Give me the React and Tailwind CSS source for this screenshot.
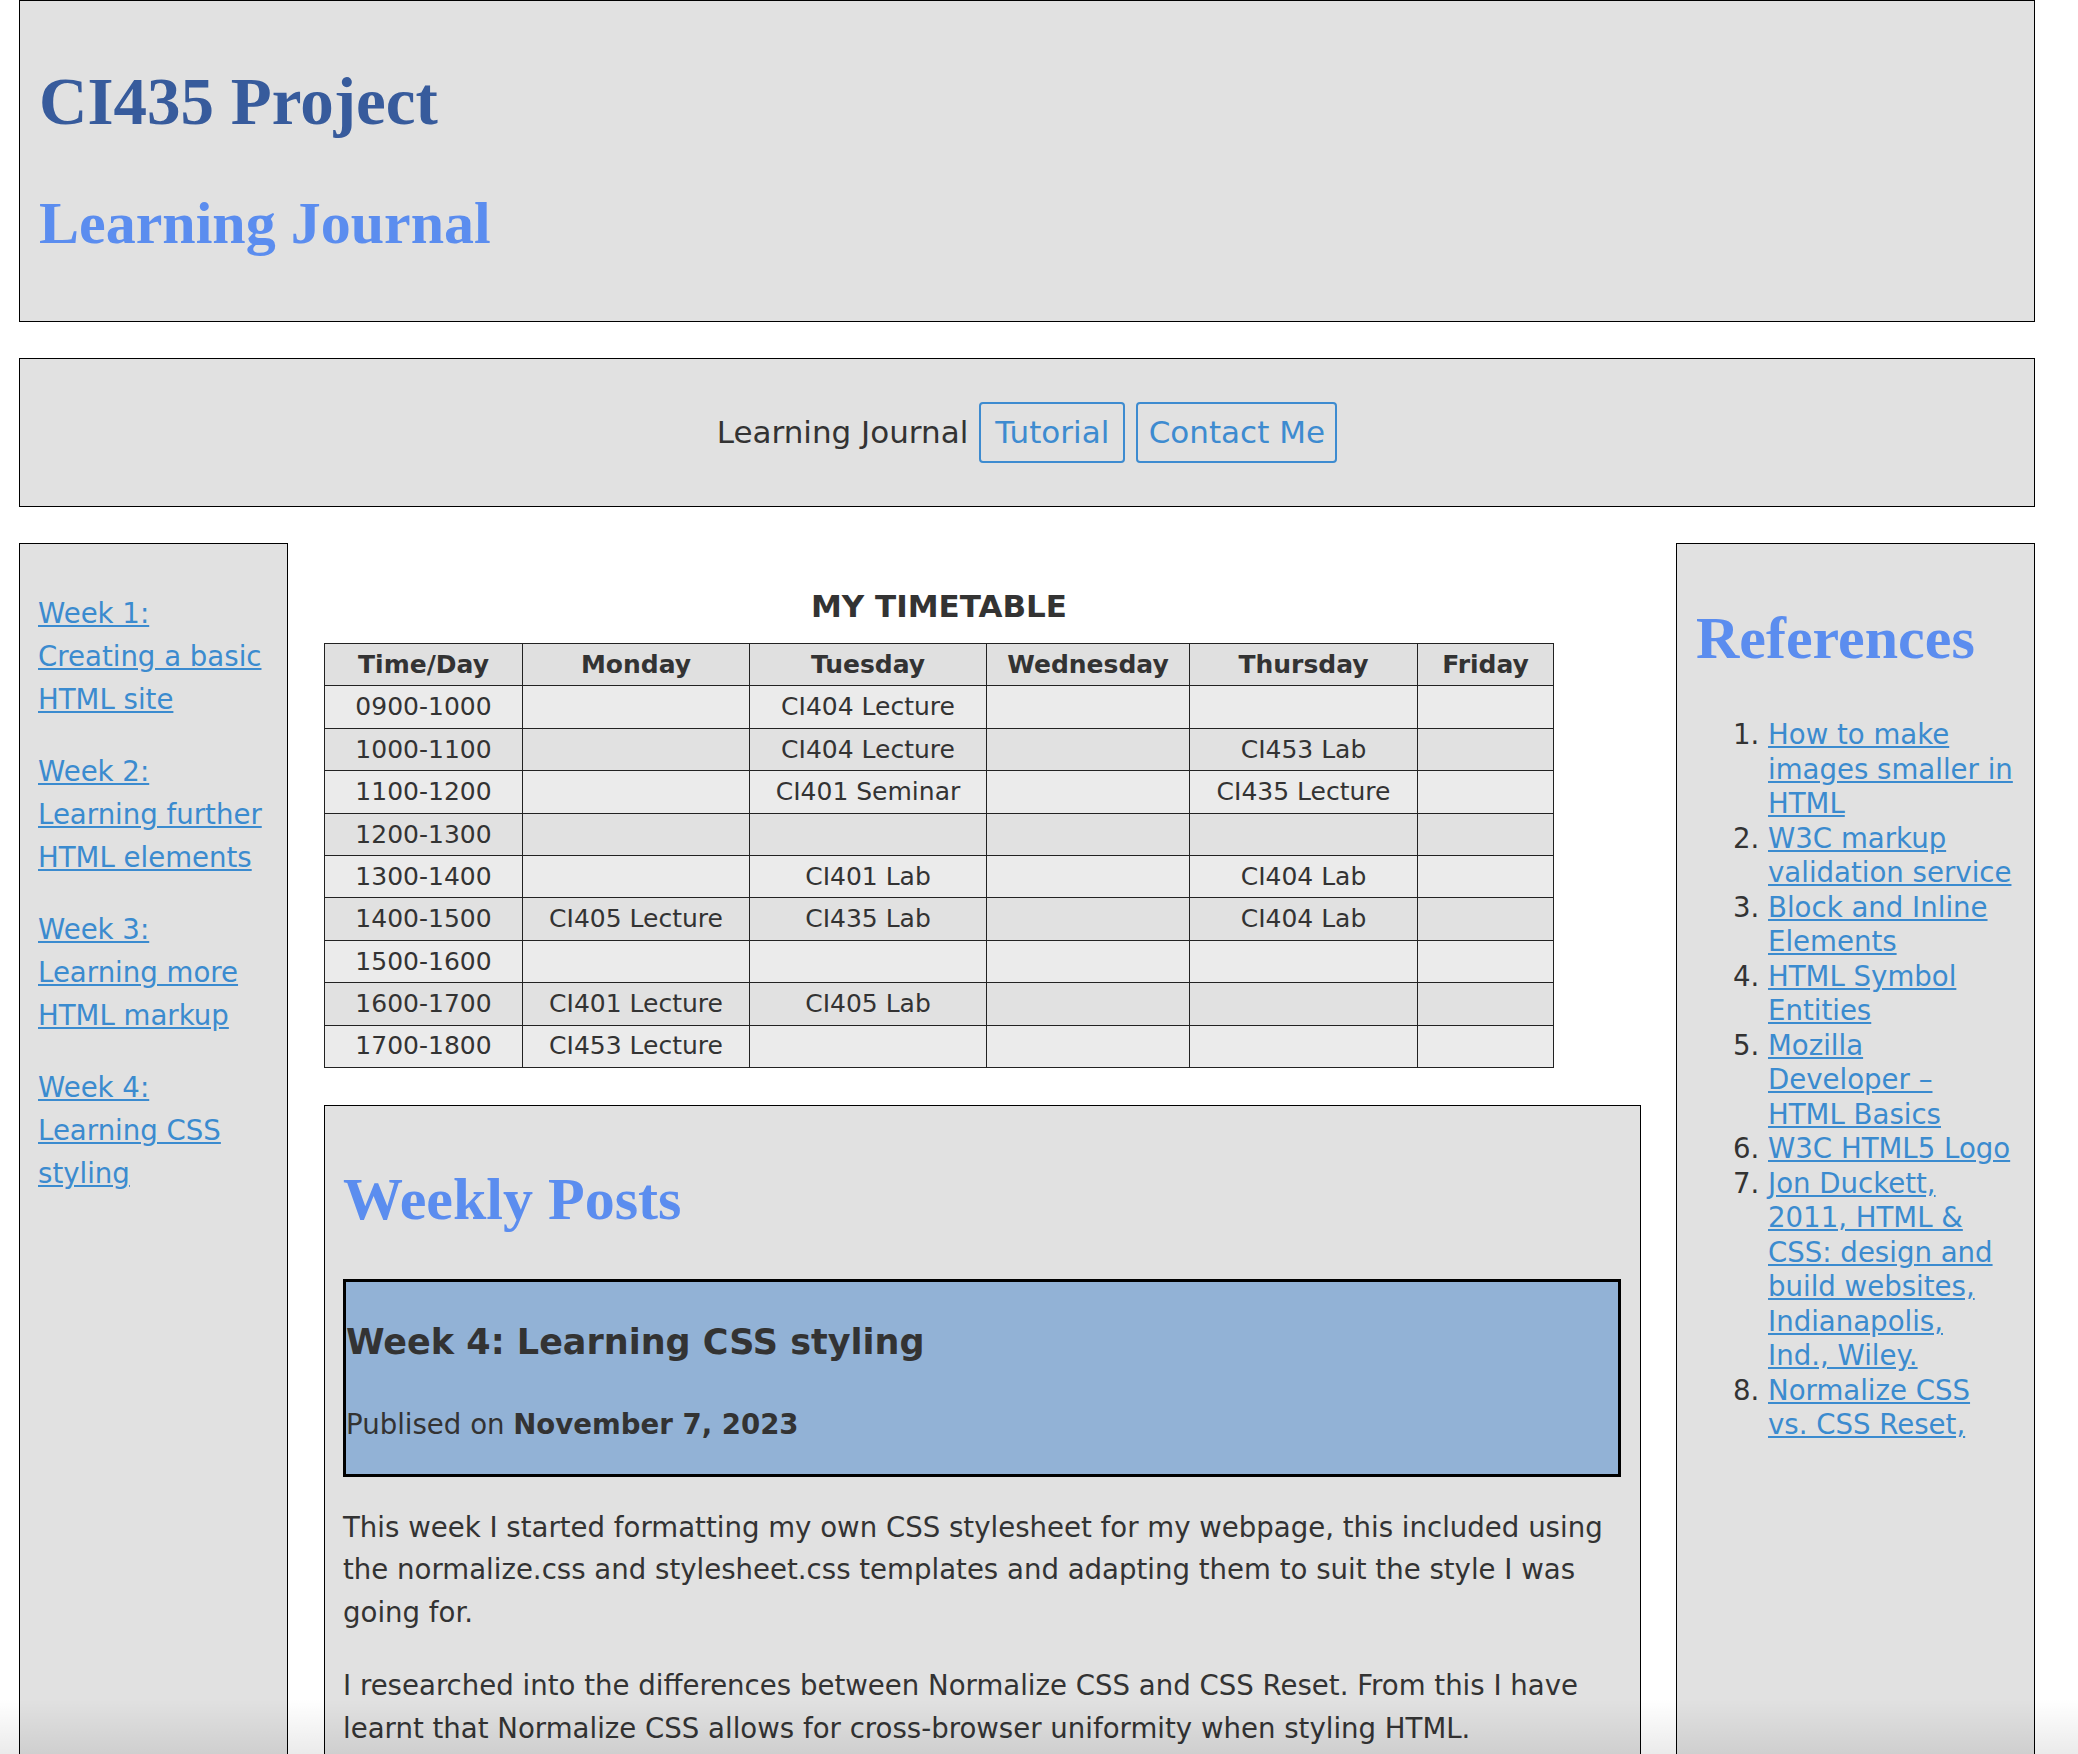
import React from 'react';

const weeks = [
  'Week 1: Creating a basic HTML site',
  'Week 2: Learning further HTML elements',
  'Week 3: Learning more HTML markup',
  'Week 4: Learning CSS styling',
];

const references = [
  ['How to make', 'images smaller in', 'HTML'],
  ['W3C markup', 'validation service'],
  ['Block and Inline', 'Elements'],
  ['HTML Symbol', 'Entities'],
  ['Mozilla', 'Developer –', 'HTML Basics'],
  ['W3C HTML5 Logo'],
  ['Jon Duckett,', '2011, HTML &', 'CSS: design and', 'build websites,', 'Indianapolis,', 'Ind., Wiley.'],
  ['Normalize CSS', 'vs. CSS Reset,'],
];

const days = ['Time/Day', 'Monday', 'Tuesday', 'Wednesday', 'Thursday', 'Friday'];

const timetable = [
  ['0900-1000', '', 'CI404 Lecture', '', '', ''],
  ['1000-1100', '', 'CI404 Lecture', '', 'CI453 Lab', ''],
  ['1100-1200', '', 'CI401 Seminar', '', 'CI435 Lecture', ''],
  ['1200-1300', '', '', '', '', ''],
  ['1300-1400', '', 'CI401 Lab', '', 'CI404 Lab', ''],
  ['1400-1500', 'CI405 Lecture', 'CI435 Lab', '', 'CI404 Lab', ''],
  ['1500-1600', '', '', '', '', ''],
  ['1600-1700', 'CI401 Lecture', 'CI405 Lab', '', '', ''],
  ['1700-1800', 'CI453 Lecture', '', '', '', ''],
];

const serif = "font-['Liberation_Serif',serif] font-bold";

export default function App() {
  return (
    <div className="relative h-screen overflow-hidden bg-white font-['DejaVu_Sans',sans-serif] text-[#333]">
      <div className="pl-[19px] pr-[43px]">
        {/* Header */}
        <header className="border border-black bg-[#e1e1e1] px-[19px] pt-[67px] pb-[68px]">
          <h1 className={`${serif} text-[67px] leading-none text-[#375b9c]`}>CI435 Project</h1>
          <h2 className={`${serif} mt-[58px] text-[60px] leading-none text-[#5b8def]`}>Learning Journal</h2>
        </header>

        {/* Nav */}
        <nav className="mt-[36px] flex h-[149px] items-center justify-center gap-[11px] border border-black bg-[#e1e1e1] text-[31px]">
          <span>Learning Journal</span>
          <a className="flex h-[61px] w-[146px] items-center justify-center rounded-[4px] border-2 border-[#3d8bd0] text-[#3d8bd0]">Tutorial</a>
          <a className="flex h-[61px] w-[201px] items-center justify-center rounded-[4px] border-2 border-[#3d8bd0] text-[#3d8bd0]">Contact Me</a>
        </nav>

        <div className="mt-[36px] flex min-h-[1400px]">
          {/* Left sidebar */}
          <aside className="w-[269px] shrink-0 border border-black bg-[#e1e1e1] pt-[48px] pl-[18px] pr-[19px]">
            <ul className="text-[27.6px] leading-[43px]">
              {weeks.map((w) => (
                <li key={w} className="mb-[29px]">
                  <a className="text-[#3b8bcf] underline">{w}</a>
                </li>
              ))}
            </ul>
          </aside>

          {/* Main */}
          <main className="flex-1 pt-[45px] pl-[36px] pr-[35px]">
            <table className="w-[1229px] table-fixed border-collapse text-[25px]">
              <caption className="pb-[18px] text-[31px] font-bold leading-[37px]">MY TIMETABLE</caption>
              <colgroup>
                <col className="w-[198px]" />
                <col className="w-[227px]" />
                <col className="w-[237px]" />
                <col className="w-[203px]" />
                <col className="w-[228px]" />
                <col className="w-[136px]" />
              </colgroup>
              <thead>
                <tr className="h-[42.4px] bg-[#e0e0e0]">
                  {days.map((d) => (
                    <th key={d} className="border border-[#222] p-0 text-center font-bold">{d}</th>
                  ))}
                </tr>
              </thead>
              <tbody>
                {timetable.map((row, i) => (
                  <tr key={row[0]} className={`h-[42.4px] ${i % 2 === 0 ? 'bg-[#ebebeb]' : 'bg-[#e1e1e1]'}`}>
                    {row.map((cell, j) => (
                      <td key={j} className="border border-[#222] p-0 text-center">{cell}</td>
                    ))}
                  </tr>
                ))}
              </tbody>
            </table>

            {/* Weekly posts */}
            <section className="mt-[37px] min-h-[800px] border border-black bg-[#e1e1e1] pt-[63px] pl-[18px] pr-[19px]">
              <h2 className={`${serif} text-[60px] leading-none text-[#5b8def]`}>Weekly Posts</h2>
              <article className="mt-[50px] border-[3px] border-black bg-[#92b2d6] pt-[40px] pb-[29px]">
                <h3 className="text-[35px] font-bold leading-[41px]">Week 4: Learning CSS styling</h3>
                <p className="mt-[42px] text-[27.6px] leading-[40px]">
                  Publised on <strong>November 7, 2023</strong>
                </p>
              </article>
              <p className="mt-[30px] text-[27.6px] leading-[42.5px]">
                This week I started formatting my own CSS stylesheet for my webpage, this included using the
                normalize.css and stylesheet.css templates and adapting them to suit the style I was going for.
              </p>
              <p className="mt-[31px] text-[27.6px] leading-[42.5px]">
                I researched into the differences between Normalize CSS and CSS Reset. From this I have learnt that
                Normalize CSS allows for cross-browser uniformity when styling HTML.
              </p>
            </section>
          </main>

          {/* Right sidebar */}
          <aside className="w-[359px] shrink-0 border border-black bg-[#e1e1e1] pt-[64px] px-[19px]">
            <h2 className={`${serif} text-[60px] leading-none text-[#5b8def]`}>References</h2>
            <ol className="mt-[50px] list-decimal pl-[72px] text-[27.6px] leading-[34.5px]">
              {references.map((lines, i) => (
                <li key={i} className="whitespace-nowrap">
                  <a className="text-[#3b8bcf] underline">
                    {lines.map((l, k) => (
                      <React.Fragment key={k}>
                        {k > 0 && <br />}
                        {l}
                      </React.Fragment>
                    ))}
                  </a>
                </li>
              ))}
            </ol>
          </aside>
        </div>
      </div>

      {/* bottom window shade */}
      <div className="pointer-events-none absolute inset-x-0 bottom-0 h-[55px] bg-linear-to-b from-transparent to-black/[0.08]" />
    </div>
  );
}
